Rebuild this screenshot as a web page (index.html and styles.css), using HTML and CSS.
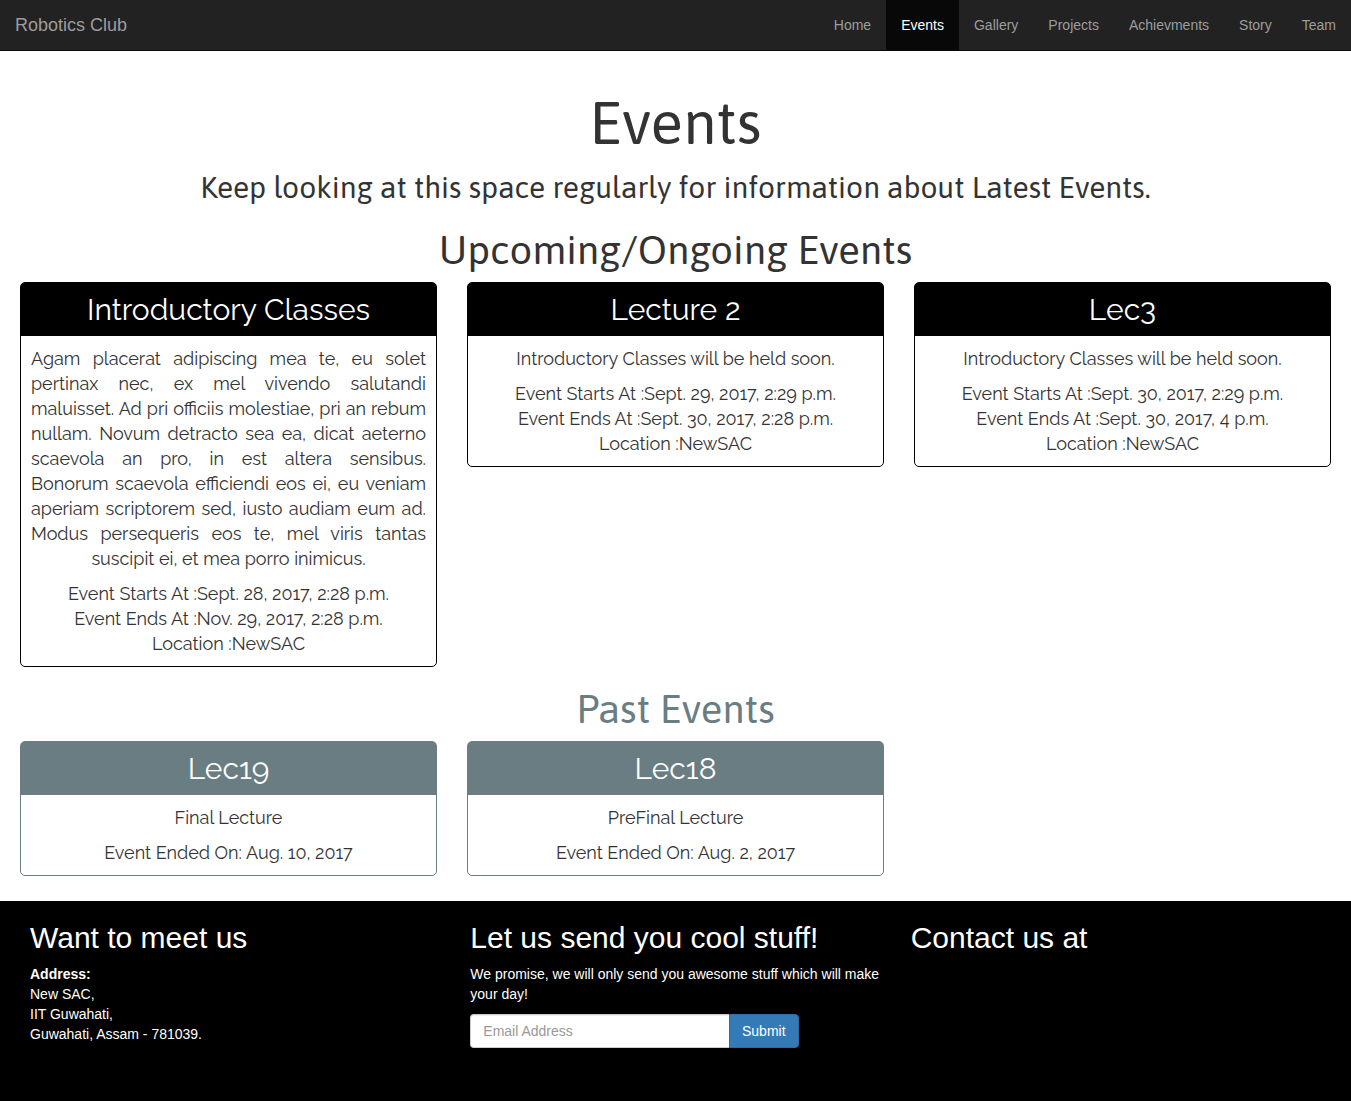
FILE: index.html
```html
<!DOCTYPE html>
<html lang="en">
<head>
  <meta charset="utf-8">
  <meta name="viewport" content="width=device-width, initial-scale=1">
  <title>Events - Robotics Club</title>
  <link rel="stylesheet" href="styles.css">
</head>
<body>
  <header class="navbar">
    <a class="navbar-brand" href="#">Robotics Club</a>
    <nav>
      <ul class="navbar-links">
        <li><a href="#">Home</a></li>
        <li><a class="active" href="#" aria-current="page">Events</a></li>
        <li><a href="#">Gallery</a></li>
        <li><a href="#">Projects</a></li>
        <li><a href="#">Achievments</a></li>
        <li><a href="#">Story</a></li>
        <li><a href="#">Team</a></li>
      </ul>
    </nav>
  </header>

  <main class="events">
    <h1 class="page-title">Events</h1>
    <p class="page-lead">Keep looking at this space regularly for information about Latest Events.</p>

    <section>
      <h2 class="section-title">Upcoming/Ongoing Events</h2>
      <div class="cards">
        <article class="card">
          <h3 class="card-title">Introductory Classes</h3>
          <div class="card-body">
            <p class="description">Agam placerat adipiscing mea te, eu solet pertinax nec, ex mel vivendo salutandi maluisset. Ad pri officiis molestiae, pri an rebum nullam. Novum detracto sea ea, dicat aeterno scaevola an pro, in est altera sensibus. Bonorum scaevola efficiendi eos ei, eu veniam aperiam scriptorem sed, iusto audiam eum ad. Modus persequeris eos te, mel viris tantas suscipit ei, et mea porro inimicus.</p>
            <p>Event Starts At :Sept. 28, 2017, 2:28 p.m.<br>Event Ends At :Nov. 29, 2017, 2:28 p.m.<br>Location :NewSAC</p>
          </div>
        </article>
        <article class="card">
          <h3 class="card-title">Lecture 2</h3>
          <div class="card-body">
            <p class="description">Introductory Classes will be held soon.</p>
            <p>Event Starts At :Sept. 29, 2017, 2:29 p.m.<br>Event Ends At :Sept. 30, 2017, 2:28 p.m.<br>Location :NewSAC</p>
          </div>
        </article>
        <article class="card">
          <h3 class="card-title">Lec3</h3>
          <div class="card-body">
            <p class="description">Introductory Classes will be held soon.</p>
            <p>Event Starts At :Sept. 30, 2017, 2:29 p.m.<br>Event Ends At :Sept. 30, 2017, 4 p.m.<br>Location :NewSAC</p>
          </div>
        </article>
      </div>
    </section>

    <section class="past">
      <h2 class="section-title">Past Events</h2>
      <div class="cards">
        <article class="card">
          <h3 class="card-title">Lec19</h3>
          <div class="card-body">
            <p class="description">Final Lecture</p>
            <p>Event Ended On: Aug. 10, 2017</p>
          </div>
        </article>
        <article class="card">
          <h3 class="card-title">Lec18</h3>
          <div class="card-body">
            <p class="description">PreFinal Lecture</p>
            <p>Event Ended On: Aug. 2, 2017</p>
          </div>
        </article>
      </div>
    </section>
  </main>

  <footer class="footer">
    <section>
      <h2 class="footer-title">Want to meet us</h2>
      <address class="address"><strong>Address:</strong><br>New SAC,<br>IIT Guwahati,<br>Guwahati, Assam - 781039.</address>
    </section>
    <section>
      <h2 class="footer-title">Let us send you cool stuff!</h2>
      <p class="footer-text">We promise, we will only send you awesome stuff which will make your day!</p>
      <form class="subscribe">
        <input class="subscribe-input" type="email" placeholder="Email Address" aria-label="Email Address">
        <button class="subscribe-button" type="submit">Submit</button>
      </form>
    </section>
    <section>
      <h2 class="footer-title">Contact us at</h2>
    </section>
  </footer>
</body>
</html>
```
FILE: styles.css
```css
* {
  box-sizing: border-box;
}

body {
  display: flex;
  flex-direction: column;
  min-height: 100vh;
  margin: 0;
  background: #fff;
  color: #333;
  font: 14px/20px "Liberation Sans", Arial, sans-serif;
}

h1, h2, h3, p {
  margin: 0;
  font-weight: 400;
}

/* Navigation bar */
.navbar {
  display: flex;
  flex-wrap: wrap;
  justify-content: space-between;
  background: #222;
  border-bottom: 1px solid #080808;
}

.navbar a {
  display: block;
  padding: 15px;
  color: #9d9d9d;
  text-decoration: none;
}

.navbar .navbar-brand {
  font-size: 18px;
}

.navbar-links {
  display: flex;
  flex-wrap: wrap;
  margin: 0;
  padding: 0;
  list-style: none;
}

.navbar .active {
  background: #080808;
  color: #fff;
}

/* Events */
.events {
  padding: 39px 20px 25px;
  text-align: center;
}

.page-title,
.page-lead,
.section-title {
  font-family: Asap, Lato, sans-serif;
}

.page-title {
  font-size: 60px;
  line-height: 66px;
}

.page-lead {
  margin: 15px 0 24px;
  font-size: 30px;
  line-height: 33px;
}

.section-title {
  margin: 20px 0 10px;
  font-size: 40px;
  line-height: 44px;
}

.cards {
  display: grid;
  grid-template-columns: repeat(3, 1fr);
  align-items: start;
  gap: 30px;
}

.card {
  border: 1px solid #000;
  border-radius: 5px;
  font-family: Raleway, "Open Sans", sans-serif;
}

.card-title {
  padding: 10px;
  border-radius: 3px 3px 0 0;
  background: #000;
  color: #fff;
  font-size: 30px;
  line-height: 33px;
}

.card-body {
  display: grid;
  gap: 10px;
  padding: 10px;
  font-size: 18px;
  line-height: 25px;
}

.description {
  text-align: justify;
  text-align-last: center;
}

.past .section-title {
  color: #697d83;
}

.past .card {
  border-color: #697d83;
}

.past .card-title {
  background: #697d83;
}

/* Footer */
.footer {
  display: grid;
  flex: 1;
  grid-template-columns: repeat(3, 1fr);
  gap: 30px;
  padding: 20px 30px 50px;
  background: #000;
  color: #fff;
}

.footer-title {
  margin-bottom: 10px;
  font-size: 30px;
  line-height: 33px;
}

.address {
  font-style: normal;
}

.subscribe {
  display: flex;
  width: 80%;
  margin-top: 10px;
}

.subscribe-input {
  flex: 1;
  min-width: 0;
  height: 34px;
  padding: 6px 12px;
  border: 1px solid #ccc;
  border-right: 0;
  border-radius: 4px 0 0 4px;
  background: #fff;
  box-shadow: inset 0 1px 1px rgba(0, 0, 0, 0.075);
  color: #555;
  font: inherit;
}

.subscribe-input::placeholder {
  color: #999;
}

.subscribe-button {
  padding: 6px 12px;
  border: 1px solid #2e6da4;
  border-radius: 0 4px 4px 0;
  background: #337ab7;
  color: #fff;
  font: inherit;
}
```
